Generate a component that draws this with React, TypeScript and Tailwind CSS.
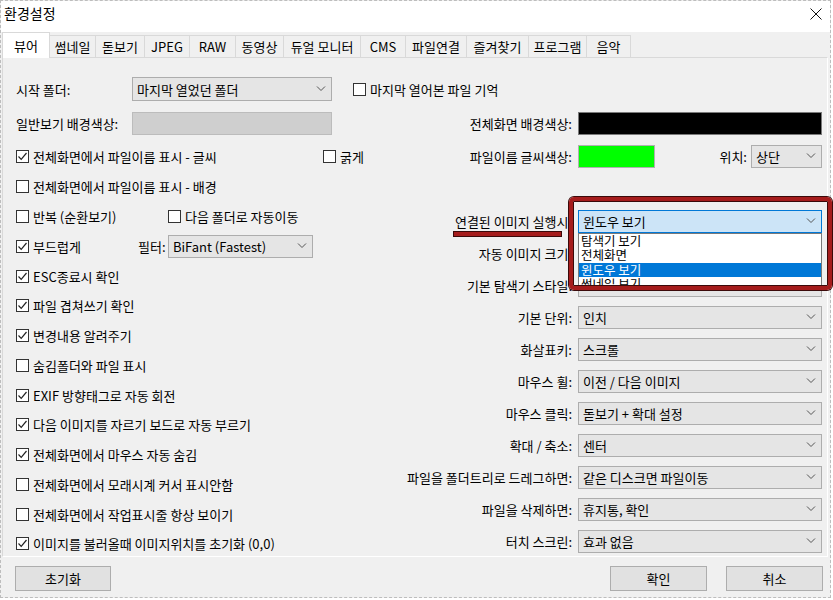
import React from "react";

const tabs = [
  { name: "뷰어", w: "w-[48px]", active: true },
  { name: "썸네일", w: "w-[47px]" },
  { name: "돋보기", w: "w-[50px]" },
  { name: "JPEG", w: "w-[46px]" },
  { name: "RAW", w: "w-[47px]" },
  { name: "동영상", w: "w-[49px]" },
  { name: "듀얼 모니터", w: "w-[78px]" },
  { name: "CMS", w: "w-[46px]" },
  { name: "파일연결", w: "w-[62px]" },
  { name: "즐겨찾기", w: "w-[63px]" },
  { name: "프로그램", w: "w-[59px]" },
  { name: "음악", w: "w-[45px]" },
];

const leftRows: { label: string; checked: boolean }[] = [
  { label: "ESC종료시 확인", checked: true },
  { label: "파일 겹쳐쓰기 확인", checked: true },
  { label: "변경내용 알려주기", checked: true },
  { label: "숨김폴더와 파일 표시", checked: false },
  { label: "EXIF 방향태그로 자동 회전", checked: true },
  { label: "다음 이미지를 자르기 보드로 자동 부르기", checked: true },
  { label: "전체화면에서 마우스 자동 숨김", checked: true },
  { label: "전체화면에서 모래시계 커서 표시안함", checked: false },
  { label: "전체화면에서 작업표시줄 항상 보이기", checked: false },
  { label: "이미지를 불러올때 이미지위치를 초기화 (0,0)", checked: true },
];

const rightRows = [
  { label: "기본 단위:", value: "인치" },
  { label: "화살표키:", value: "스크롤" },
  { label: "마우스 휠:", value: "이전 / 다음 이미지" },
  { label: "마우스 클릭:", value: "돋보기 + 확대 설정" },
  { label: "확대 / 축소:", value: "센터" },
  { label: "파일을 폴더트리로 드레그하면:", value: "같은 디스크면 파일이동" },
  { label: "파일을 삭제하면:", value: "휴지통, 확인" },
  { label: "터치 스크린:", value: "효과 없음" },
];

function Chevron() {
  return (
    <svg width="10" height="6" viewBox="0 0 10 6" className="shrink-0">
      <polyline points="1,0.5 5,4.5 9,0.5" fill="none" stroke="#555" strokeWidth="1" />
    </svg>
  );
}

function Select({ value, className = "", focused = false }: { value: string; className?: string; focused?: boolean }) {
  return (
    <div
      className={`flex items-center justify-between h-[23px] pl-[4px] pr-[5px] border ${
        focused ? "bg-[#cce4f7] border-[#0078d7]" : "bg-[#e5e5e5] border-[#adadad]"
      } ${className}`}
    >
      <span className="whitespace-nowrap">{value}</span>
      <Chevron />
    </div>
  );
}

function Check({ checked, label }: { checked: boolean; label: string }) {
  return (
    <label className="flex items-center gap-[4px] whitespace-nowrap">
      <span className="w-[13px] h-[13px] shrink-0 border border-[#333] bg-white flex items-center justify-center">
        {checked && (
          <svg width="11" height="11" viewBox="0 0 11 11">
            <polyline points="1.5,5.5 4.2,8.3 9.5,2" fill="none" stroke="#222" strokeWidth="1.2" />
          </svg>
        )}
      </span>
      <span>{label}</span>
    </label>
  );
}

function RightRow({ label, children }: { label: string; children: React.ReactNode }) {
  return (
    <div className="h-[32px] flex items-center">
      <span className="w-[172px] text-right whitespace-nowrap">{label}</span>
      <div className="ml-[6px] w-[244px]">{children}</div>
    </div>
  );
}

export default function App() {
  return (
    <div className="relative w-[833px] h-[600px] bg-white overflow-hidden font-['Noto_Sans_CJK_KR','Noto_Sans',sans-serif] text-[13px] leading-[15px] text-black">
      <div className="w-[831px] h-[598px] border border-dashed border-[#bdbdbd] bg-[#f0f0f0] flex flex-col">
        {/* title bar */}
        <div className="h-[31px] bg-white flex items-start justify-between pl-[3px] pr-[8px] pt-[4px]">
          <span className="text-[14px] leading-[17px]">환경설정</span>
          <svg width="12" height="12" viewBox="0 0 12 12" className="mt-[3px]">
            <path d="M0.5 0.5 L11.5 11.5 M11.5 0.5 L0.5 11.5" stroke="#111" strokeWidth="1" />
          </svg>
        </div>

        {/* tabs */}
        <div className="h-[25px] flex items-end pl-[1px] relative z-10">
          {tabs.map((t) => (
            <div
              key={t.name}
              className={`${t.w} flex items-center justify-center border border-b-0 whitespace-nowrap ${
                t.active
                  ? "h-[26px] -mb-px bg-white border-[#d9d9d9]"
                  : "h-[22px] bg-[#f0f0f0] border-[#d9d9d9] -ml-px"
              }`}
            >
              {t.name}
            </div>
          ))}
        </div>

        {/* panel */}
        <div className="ml-[1px] w-[826px] h-[500px] border border-[#d9d9d9] border-b-white border-r-white bg-[#f0f0f0] pt-[14px] pl-[13px] pr-[5px]">
          <div className="h-[34px] flex items-center">
            <span className="w-[116px]">시작 폴더:</span>
            <Select value="마지막 열었던 폴더" className="w-[200px] h-[24px]" />
            <div className="ml-[21px]">
              <Check checked={false} label="마지막 열어본 파일 기억" />
            </div>
          </div>
          <div className="h-[34px] flex items-center">
            <span className="w-[116px]">일반보기 배경색상:</span>
            <div className="w-[200px] h-[23px] bg-[#cfcfcf] border border-[#bcbcbc]" />
            <div className="ml-auto w-[422px] flex items-center">
              <span className="w-[172px] text-right whitespace-nowrap">전체화면 배경색상:</span>
              <div className="ml-[6px] w-[244px] h-[23px] bg-black border border-[#7a7a7a]" />
            </div>
          </div>
          <div className="h-[32px] flex items-center">
            <div className="w-[307px]">
              <Check checked label="전체화면에서 파일이름 표시 - 글씨" />
            </div>
            <Check checked={false} label="굵게" />
            <div className="ml-auto w-[422px] flex items-center">
              <span className="w-[172px] text-right whitespace-nowrap">파일이름 글씨색상:</span>
              <div className="ml-[6px] w-[77px] h-[23px] bg-[#00ff00] border border-[#b0b0b0]" />
              <span className="ml-auto">위치:</span>
              <Select value="상단" className="ml-[4px] w-[71px]" />
            </div>
          </div>

          <div className="flex">
            <div className="w-[384px]">
              <div className="h-[29.75px] flex items-center">
                <Check checked={false} label="전체화면에서 파일이름 표시 - 배경" />
              </div>
              <div className="h-[29.75px] flex items-center">
                <div className="w-[152px]">
                  <Check checked={false} label="반복 (순환보기)" />
                </div>
                <Check checked={false} label="다음 폴더로 자동이동" />
              </div>
              <div className="h-[29.75px] flex items-center">
                <div className="w-[122px]">
                  <Check checked label="부드럽게" />
                </div>
                <span className="w-[30px] whitespace-nowrap">필터:</span>
                <Select value="BiFant (Fastest)" className="w-[145px]" />
              </div>
              {leftRows.map((r) => (
                <div key={r.label} className="h-[29.75px] flex items-center">
                  <Check checked={r.checked} label={r.label} />
                </div>
              ))}
            </div>

            <div className="w-[422px] pt-[33px]">
              <RightRow label="연결된 이미지 실행시:">
                <div className="relative">
                  <Select value="윈도우 보기" focused />
                  <div className="absolute left-0 top-full w-[244px] h-[58px] overflow-hidden bg-white border border-[#7a7a7a] z-20 text-[12.5px] leading-[14.5px]">
                    <div className="h-[14.5px] pl-[2px]">탐색기 보기</div>
                    <div className="h-[14.5px] pl-[2px]">전체화면</div>
                    <div className="h-[14.5px] pl-[2px] bg-[#0078d7] text-white">윈도우 보기</div>
                    <div className="h-[14.5px] pl-[2px]">썸네일 보기</div>
                  </div>
                </div>
              </RightRow>
              <RightRow label="자동 이미지 크기:">
                <Select value="" />
              </RightRow>
              <RightRow label="기본 탐색기 스타일:">
                <Select value="" />
              </RightRow>
              {rightRows.map((r) => (
                <RightRow key={r.label} label={r.label}>
                  <Select value={r.value} />
                </RightRow>
              ))}
            </div>
          </div>
        </div>

        {/* footer */}
        <div className="flex-1 flex items-start pt-[9px] pl-[14px] pr-[7px]">
          <button className="w-[96px] h-[25px] bg-[#e1e1e1] border border-[#adadad]">초기화</button>
          <button className="ml-auto w-[97px] h-[25px] bg-[#e1e1e1] border border-[#adadad]">확인</button>
          <button className="ml-[19px] w-[97px] h-[25px] bg-[#e1e1e1] border border-[#adadad]">취소</button>
        </div>
      </div>

      {/* annotation */}
      <div className="absolute left-[453px] top-[231px] w-[109px] h-[6px] bg-[#a51c1c] border border-[#3b0a0a]" />
      <div className="absolute left-[569px] top-[197px] w-[263px] h-[93px] rounded-[5px] border-[4px] border-[#a51c1c] shadow-[0_0_0_1px_#3b0a0a,inset_0_0_0_1px_#3b0a0a] z-30" />
    </div>
  );
}
